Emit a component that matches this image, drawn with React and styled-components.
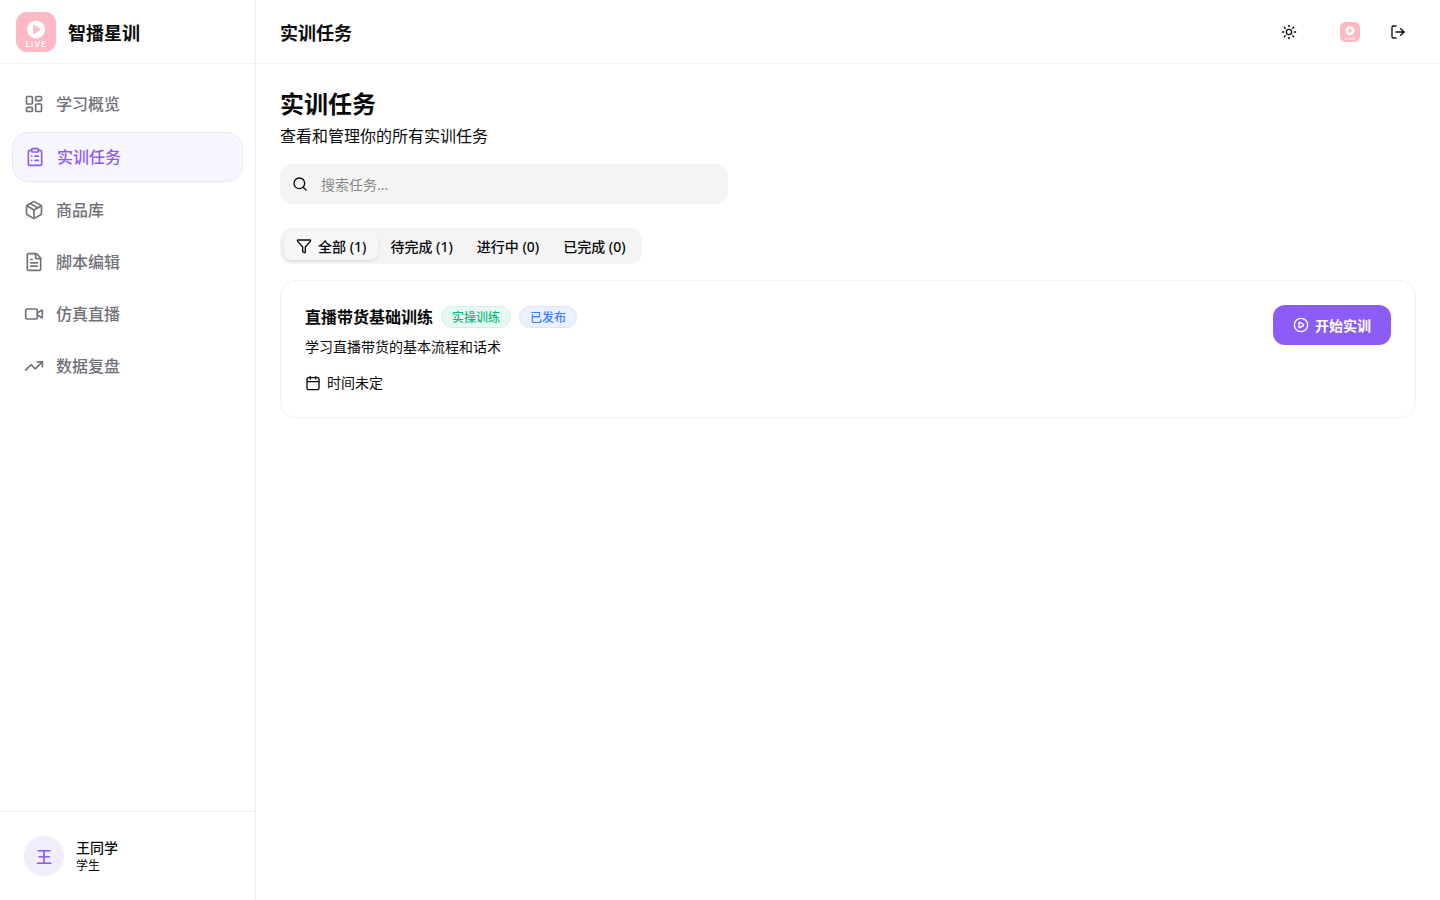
import React from "react";
import styled, { createGlobalStyle } from "styled-components";
import {
  LayoutDashboard,
  ClipboardList,
  Package,
  FileText,
  Video,
  TrendingUp,
  Sun,
  LogOut,
  Funnel,
  Calendar,
  CirclePlay,
  Search,
} from "lucide-react";

const GlobalStyle = createGlobalStyle`
  * { box-sizing: border-box; }
  html, body { margin: 0; padding: 0; background: #fff; }
  body {
    font-family: "Noto Sans", "Noto Sans CJK SC", sans-serif;
    color: #0a0a0a;
  }
`;

const NAV = [
  { label: "学习概览", icon: LayoutDashboard },
  { label: "实训任务", icon: ClipboardList, active: true },
  { label: "商品库", icon: Package },
  { label: "脚本编辑", icon: FileText },
  { label: "仿真直播", icon: Video },
  { label: "数据复盘", icon: TrendingUp },
];

const TABS = [
  { label: "全部 (1)", icon: true, active: true },
  { label: "待完成 (1)" },
  { label: "进行中 (0)" },
  { label: "已完成 (0)" },
];

const Logo = ({ size }) => (
  <svg width={size} height={size} viewBox="0 0 40 40" aria-label="logo">
    <rect width="40" height="40" rx="11" fill="#ffb8c4" />
    <circle cx="20" cy="17.5" r="9" fill="#fff" />
    <path d="M17.2 12.6 25 17.5l-7.8 4.9z" fill="#ffb8c4" />
    <text
      x="20.3"
      y="35"
      textAnchor="middle"
      fontSize="7.5"
      fontWeight="700"
      letterSpacing="1.2"
      fill="#fff"
      fontFamily="Inter, sans-serif"
    >
      LIVE
    </text>
  </svg>
);

const App = () => (
  <Page>
    <GlobalStyle />
    <Sidebar>
      <Brand>
        <Logo size={40} />
        <BrandName>智播星训</BrandName>
      </Brand>
      <Nav>
        {NAV.map(({ label, icon: Icon, active }) => (
          <NavItem key={label} $active={active}>
            <Icon size={20} strokeWidth={2} />
            <span>{label}</span>
          </NavItem>
        ))}
      </Nav>
      <UserBox>
        <Avatar>王</Avatar>
        <div>
          <UserName>王同学</UserName>
          <UserRole>学生</UserRole>
        </div>
      </UserBox>
    </Sidebar>
    <Main>
      <Header>
        <HeaderTitle>实训任务</HeaderTitle>
        <HeaderActions>
          <IconBtn>
            <Sun size={16} />
          </IconBtn>
          <SmallLogo>
            <Logo size={20} />
          </SmallLogo>
          <IconBtn>
            <LogOut size={16} />
          </IconBtn>
        </HeaderActions>
      </Header>
      <Content>
        <PageTitle>实训任务</PageTitle>
        <PageSub>查看和管理你的所有实训任务</PageSub>
        <SearchBox>
          <Search size={16} />
          <SearchInput placeholder="搜索任务..." />
        </SearchBox>
        <Tabs>
          {TABS.map((t) => (
            <Tab key={t.label} $active={t.active}>
              {t.icon && <Funnel size={16} />}
              {t.label}
            </Tab>
          ))}
        </Tabs>
        <Card>
          <div>
            <CardHead>
              <CardTitle>直播带货基础训练</CardTitle>
              <Badge $color="#10b981" $bg="#e8f8f2" $border="#d0f0e4">
                实操训练
              </Badge>
              <Badge $color="#3b82f6" $bg="#ebf0fe" $border="#dde5fc">
                已发布
              </Badge>
            </CardHead>
            <CardDesc>学习直播带货的基本流程和话术</CardDesc>
            <CardMeta>
              <Calendar size={16} />
              时间未定
            </CardMeta>
          </div>
          <StartBtn>
            <CirclePlay size={16} />
            开始实训
          </StartBtn>
        </Card>
      </Content>
    </Main>
  </Page>
);

export default App;

const Page = styled.div`
  display: flex;
  width: 100%;
  height: 100vh;
  overflow: hidden;
`;

const Sidebar = styled.aside`
  width: 256px;
  flex-shrink: 0;
  display: flex;
  flex-direction: column;
  border-right: 1px solid #f0eefa;
`;

const Brand = styled.div`
  height: 64px;
  display: flex;
  align-items: center;
  gap: 12px;
  padding: 0 16px;
  border-bottom: 1px solid #f0eefa;
`;

const BrandName = styled.span`
  font-size: 18px;
  font-weight: 700;
`;

const Nav = styled.nav`
  flex: 1;
  display: flex;
  flex-direction: column;
  gap: 4px;
  padding: 16px 12px;
`;

const NavItem = styled.div`
  display: flex;
  align-items: center;
  gap: 12px;
  padding: 0 12px;
  height: ${(p) => (p.$active ? "50px" : "48px")};
  font-size: 16px;
  font-weight: 500;
  line-height: 24px;
  border-radius: 16px;
  border: ${(p) => (p.$active ? "1px solid #ebe4fe" : "none")};
  background: ${(p) => (p.$active ? "#f8f6ff" : "transparent")};
  color: ${(p) => (p.$active ? "#8b5cf6" : "#71717a")};
`;

const UserBox = styled.div`
  display: flex;
  align-items: center;
  gap: 12px;
  padding: 24px;
  border-top: 1px solid #f0eefa;
`;

const Avatar = styled.div`
  width: 40px;
  height: 40px;
  border-radius: 50%;
  background: #f1edfd;
  color: #8b5cf6;
  font-size: 16px;
  font-weight: 500;
  display: flex;
  align-items: center;
  justify-content: center;
`;

const UserName = styled.div`
  font-size: 14px;
  font-weight: 500;
  line-height: 20px;
`;

const UserRole = styled.div`
  font-size: 12px;
  line-height: 16px;
`;

const Main = styled.div`
  flex: 1;
  display: flex;
  flex-direction: column;
  min-width: 0;
`;

const Header = styled.header`
  height: 64px;
  display: flex;
  align-items: center;
  justify-content: space-between;
  padding: 0 24px;
  border-bottom: 1px solid #f0eefa;
`;

const HeaderTitle = styled.div`
  font-size: 18px;
  font-weight: 600;
`;

const HeaderActions = styled.div`
  display: flex;
  align-items: center;
`;

const IconBtn = styled.div`
  width: 36px;
  height: 36px;
  display: flex;
  align-items: center;
  justify-content: center;
`;

const SmallLogo = styled.div`
  display: flex;
  margin: 0 20px 0 33px;
`;

const Content = styled.main`
  padding: 24px;
`;

const PageTitle = styled.h1`
  margin: 0;
  font-size: 24px;
  font-weight: 700;
  line-height: 32px;
`;

const PageSub = styled.p`
  margin: 4px 0 0;
  font-size: 16px;
  line-height: 24px;
`;

const SearchBox = styled.div`
  margin-top: 16px;
  width: 448px;
  height: 40px;
  display: flex;
  align-items: center;
  gap: 13px;
  padding: 0 12px;
  border-radius: 12px;
  background: #f4f4f4;
`;

const SearchInput = styled.input`
  flex: 1;
  border: 0;
  outline: 0;
  padding: 0;
  background: transparent;
  font: inherit;
  font-size: 14px;
  color: #0a0a0a;
  &::placeholder {
    color: #8a8a8a;
    opacity: 1;
  }
`;

const Tabs = styled.div`
  margin-top: 24px;
  width: fit-content;
  height: 36px;
  display: flex;
  align-items: center;
  padding: 4px;
  border-radius: 12px;
  background: #f4f4f4;
`;

const Tab = styled.div`
  height: 28px;
  display: flex;
  align-items: center;
  gap: 6px;
  padding: 0 12px;
  font-size: 14px;
  font-weight: 500;
  border-radius: 8px;
  background: ${(p) => (p.$active ? "#f7f7f7" : "transparent")};
  box-shadow: ${(p) => (p.$active ? "0 1px 3px rgba(0,0,0,.12)" : "none")};
`;

const Card = styled.section`
  margin-top: 16px;
  display: flex;
  justify-content: space-between;
  align-items: flex-start;
  padding: 24px;
  border: 1px solid #f0eefa;
  border-radius: 16px;
`;

const CardHead = styled.div`
  display: flex;
  align-items: center;
  gap: 8px;
  height: 24px;
`;

const CardTitle = styled.h3`
  margin: 0;
  font-size: 16px;
  font-weight: 600;
  line-height: 24px;
`;

const Badge = styled.span`
  height: 22px;
  display: flex;
  align-items: center;
  padding: 0 10px;
  font-size: 12px;
  font-weight: 500;
  border-radius: 11px;
  color: ${(p) => p.$color};
  background: ${(p) => p.$bg};
  border: 1px solid ${(p) => p.$border};
`;

const CardDesc = styled.p`
  margin: 8px 0 0;
  font-size: 14px;
  line-height: 20px;
`;

const CardMeta = styled.div`
  margin-top: 16px;
  display: flex;
  align-items: center;
  gap: 6px;
  font-size: 14px;
  line-height: 20px;
`;

const StartBtn = styled.button`
  height: 40px;
  display: flex;
  align-items: center;
  gap: 6px;
  padding: 0 20px;
  border: 0;
  border-radius: 12px;
  background: #8b5cf6;
  color: #fff;
  font: inherit;
  font-size: 14px;
  font-weight: 600;
`;
